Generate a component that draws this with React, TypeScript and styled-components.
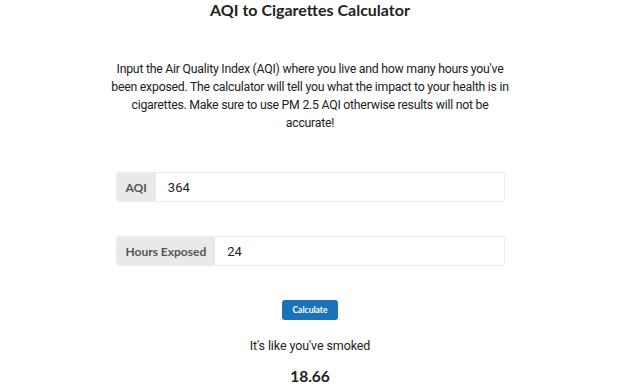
import { useState } from "react";
import styled, { createGlobalStyle } from "styled-components";

const GlobalStyle = createGlobalStyle`
    body {
        margin: 0;
        background: #fff;
        font-family: 'Roboto', 'Noto Sans', sans-serif;
        color: #222;
    }
`

const Page = styled.div`
    display: flex;
    flex-direction: column;
    align-items: center;
    padding-right: 20px;
`

const Title = styled.h1`
    font-family: 'Lato', sans-serif;
    font-weight: 700;
    font-size: 16px;
    line-height: 20px;
    margin: 0;
    color: #222;
`

const Intro = styled.p`
    width: 404px;
    margin: 40px 0 0;
    font-size: 12.3px;
    letter-spacing: -0.25px;
    line-height: 18px;
    text-align: center;
    color: #222;
`

const Form = styled.div`
    width: 389px;
    display: flex;
    flex-direction: column;
    gap: 34px;
    margin-top: 40px;
`

const InputGroup = styled.label`
    display: flex;
    height: 30px;
    border: 1px solid #ececec;
    border-radius: 3px;
    box-sizing: border-box;
    overflow: hidden;
`

const Addon = styled.span`
    display: flex;
    align-items: center;
    padding: 0 9px;
    background: #e9e9e9;
    font-family: 'Lato', sans-serif;
    font-weight: 700;
    font-size: 12px;
    color: #555;
`

const Field = styled.input`
    flex: 1;
    border: none;
    outline: none;
    padding: 0 12px;
    font-family: 'Roboto', 'Noto Sans', sans-serif;
    font-size: 13px;
    color: #222;
    background: #fff;
`

const Button = styled.button`
    margin-top: 34px;
    height: 20px;
    padding: 0 11px;
    border: none;
    border-radius: 3px;
    background: #1a72b9;
    color: #fff;
    font-family: 'Lato', sans-serif;
    font-weight: 700;
    font-size: 8.5px;
    cursor: pointer;
`

const ResultLabel = styled.div`
    margin-top: 18px;
    font-size: 12.5px;
    letter-spacing: -0.1px;
    line-height: 16px;
`

const ResultValue = styled.div`
    margin-top: 13px;
    font-family: 'Lato', sans-serif;
    font-weight: 700;
    font-size: 15.5px;
    line-height: 18px;
    color: #222;
`

const App = () => {
    const [ aqi, setAqi ] = useState<string>("364");
    const [ hours, setHours ] = useState<string>("24");
    const [ result, setResult ] = useState<string>("18.66");

    const calculate = () => {
        const cigs = (Number(aqi) / 22) * (Number(hours) / 24) * 1.128;
        setResult(cigs.toFixed(2));
    }

    return (
        <Page>
            <GlobalStyle />
            <Title>AQI to Cigarettes Calculator</Title>
            <Intro>
                Input the Air Quality Index (AQI) where you live and how many hours you've been exposed.
                The calculator will tell you what the impact to your health is in cigarettes. Make sure
                to use PM 2.5 AQI otherwise results will not be accurate!
            </Intro>
            <Form>
                <InputGroup>
                    <Addon>AQI</Addon>
                    <Field value={aqi} onChange={(e) => setAqi(e.target.value)} />
                </InputGroup>
                <InputGroup>
                    <Addon>Hours Exposed</Addon>
                    <Field value={hours} onChange={(e) => setHours(e.target.value)} />
                </InputGroup>
            </Form>
            <Button onClick={calculate}>Calculate</Button>
            <ResultLabel>It's like you've smoked</ResultLabel>
            <ResultValue>{result}</ResultValue>
        </Page>
    )
}

export default App
